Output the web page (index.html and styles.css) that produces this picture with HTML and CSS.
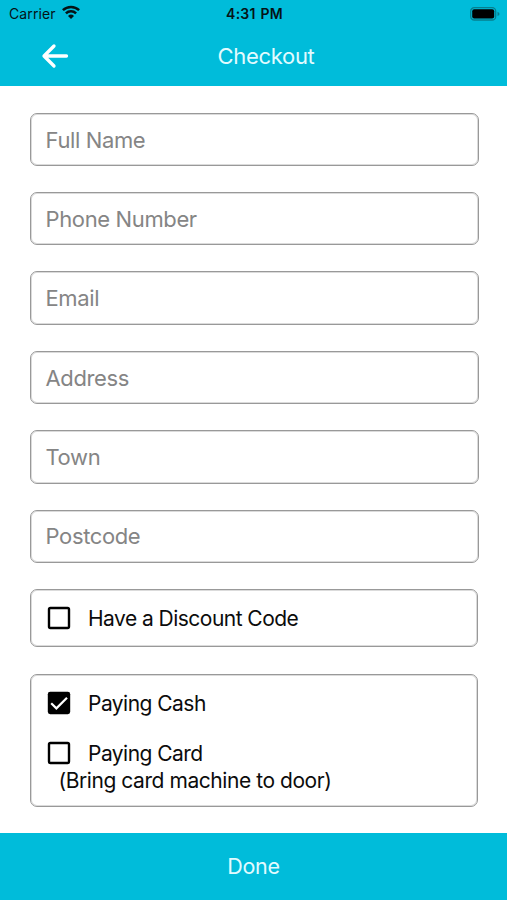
FILE: index.html
```html
<!DOCTYPE html>
<html lang="en">
<head>
<meta charset="utf-8">
<title>Checkout</title>
<link rel="stylesheet" href="styles.css">
</head>
<body>
<header class="header">
  <div class="status">
    <div class="carrier"><span>Carrier</span>
      <svg class="wifi" width="20" height="15" viewBox="0 0 20 15"><path d="M1.9 5.2a11.6 11.6 0 0 1 16.2 0M4.9 8.3a7.3 7.3 0 0 1 10.2 0" fill="none" stroke="#051316" stroke-width="2.5"/><path d="M10 14 7 11a4.3 4.3 0 0 1 6 0z" fill="#051316"/></svg>
    </div>
    <span class="time">4:31 PM</span>
    <svg class="battery" width="30" height="14" viewBox="0 0 30 14"><rect x=".7" y=".7" width="25" height="12.3" rx="3.6" fill="none" stroke="#067f8f" stroke-width="1.3"/><rect x="2.2" y="2.2" width="22" height="9.3" rx="2" fill="#000"/><path d="M27.5 4.8q2 .7 2 2.1t-2 2.1z" fill="#067f8f"/></svg>
  </div>
  <div class="navbar">
    <svg class="back" width="28" height="26" viewBox="0 0 28 26"><path d="M13 3 3 13l10 10M3.5 13H25.5" fill="none" stroke="#fff" stroke-width="3.3" stroke-linecap="round" stroke-linejoin="round"/></svg>
    <h1 class="title">Checkout</h1>
  </div>
</header>
<main class="form">
  <div class="field">Full Name</div>
  <div class="field">Phone Number</div>
  <div class="field">Email</div>
  <div class="field">Address</div>
  <div class="field">Town</div>
  <div class="field">Postcode</div>
  <section class="group discount">
    <div class="option">
      <svg width="24" height="24" viewBox="0 0 24 24"><rect x="2" y="2" width="20" height="20" rx="1.4" fill="none" stroke="#000" stroke-width="2.4"/></svg>
      <span class="label">Have a Discount Code</span>
    </div>
  </section>
  <section class="group payment">
    <div class="option">
      <svg width="24" height="24" viewBox="0 0 24 24"><rect x=".8" y=".8" width="22.4" height="22.4" rx="2.4" fill="#000"/><path d="m4.2 12.2 5.2 5.2L20 6.8" fill="none" stroke="#fff" stroke-width="2.2"/></svg>
      <span class="label">Paying Cash</span>
    </div>
    <div class="option second">
      <svg width="24" height="24" viewBox="0 0 24 24"><rect x="2" y="2" width="20" height="20" rx="1.4" fill="none" stroke="#000" stroke-width="2.4"/></svg>
      <span class="label">Paying Card</span>
    </div>
    <div class="note">(Bring card machine to door)</div>
  </section>
</main>
<footer class="footer">Done</footer>
</body>
</html>
```
FILE: styles.css
```css
* { box-sizing: border-box; }
body {
  margin: 0;
  height: 900px;
  display: flex;
  flex-direction: column;
  overflow: hidden;
  background: #fff;
  color: #0c0c0c;
  font-family: Inter, "Liberation Sans", sans-serif;
  font-size: 21.5px;
  letter-spacing: -0.3px;
  white-space: nowrap;
}
svg { display: block; flex: none; }
.header { height: 86px; background: #00bcda; }
.status {
  height: 27px;
  display: grid;
  grid-template-columns: 1fr auto 1fr;
  align-items: center;
  padding: 0 7px 0 9px;
  color: #051316;
  font-size: 14px;
  letter-spacing: 0.1px;
}
.carrier { display: flex; align-items: center; gap: 5px; }
.wifi { margin-top: -3px; }
.time { font-weight: 600; letter-spacing: 0.25px; word-spacing: 1px; }
.battery { justify-self: end; }
.navbar {
  height: 58px;
  display: grid;
  grid-template-columns: 72px 1fr 47px;
  align-items: center;
}
.back { margin-left: 41px; }
.title {
  margin: 0;
  text-align: center;
  font-size: 22px;
  font-weight: 400;
  color: #e2fbff;
}
.form {
  flex: 1;
  padding: 26.6px 28.5px 0 29.5px;
  display: flex;
  flex-direction: column;
}
.field {
  height: 53.4px;
  margin-bottom: 26px;
  padding: 0.5px 0 0 15px;
  display: flex;
  align-items: center;
  border: 1px solid #999;
  border-radius: 7px;
  box-shadow: inset 0 0 0 1px #00000024;
  color: #858585;
  font-size: 22px;
  letter-spacing: -0.37px;
}
.group {
  width: 448.5px;
  border: 1px solid #999;
  border-radius: 7px;
  box-shadow: inset 0 0 0 1px #00000024;
  font-size: 21px;
  letter-spacing: -0.53px;
}
.discount { height: 58.5px; margin-bottom: 26.5px; padding: 15px 16px; }
.payment { height: 133.5px; padding: 15px 16px; }
.option { height: 26px; display: flex; align-items: center; gap: 17.5px; }
.label { padding-top: 2px; }
.second { margin-top: 24px; }
.note { padding: 1px 0 0 12px; line-height: 28px; letter-spacing: -0.44px; }
.footer {
  height: 67px;
  padding-bottom: 1px;
  display: flex;
  align-items: center;
  justify-content: center;
  background: #00bcda;
  color: #e2fbff;
}
```
